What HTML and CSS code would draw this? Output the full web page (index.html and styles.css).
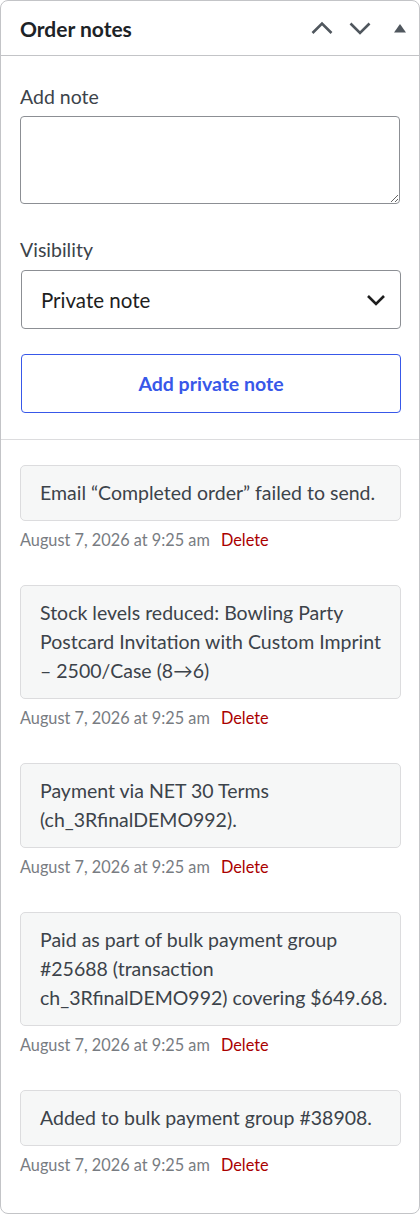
FILE: index.html
```html
<!DOCTYPE html>
<html lang="en">
<head>
<meta charset="utf-8">
<title>Order notes</title>
<link rel="stylesheet" href="styles.css">
</head>
<body>
<div class="postbox">
  <div class="postbox-header">
    <h2 class="postbox-title">Order notes</h2>
    <div class="handle-actions">
      <svg class="icon icon-up" width="24" height="24" viewBox="0 0 24 24"><polyline points="2.5,17 12,7.5 21.5,17" fill="none" stroke="#50575e" stroke-width="2.6"/></svg>
      <svg class="icon icon-down" width="24" height="24" viewBox="0 0 24 24"><polyline points="2.5,7.5 12,17 21.5,7.5" fill="none" stroke="#50575e" stroke-width="2.6"/></svg>
      <svg class="icon icon-toggle" width="16" height="24" viewBox="0 0 16 24"><polygon points="2,16.5 8,8 14,16.5" fill="#50575e"/></svg>
    </div>
  </div>
  <div class="add-note">
    <label class="field-label" for="note">Add note</label>
    <textarea id="note" class="note-input"></textarea>
    <label class="field-label label-visibility" for="vis">Visibility</label>
    <div class="select-wrap">
      <select id="vis" class="note-select"><option>Private note</option><option>Note to customer</option></select>
      <svg class="select-arrow" width="20" height="12" viewBox="0 0 20 12"><polyline points="2,2 10,10 18,2" fill="none" stroke="#1e1e1e" stroke-width="2.6"/></svg>
    </div>
    <button class="add-btn" type="button">Add private note</button>
  </div>
  <ul class="notes">
    <li class="note">
      <div class="note-content">Email “Completed order” failed to send.</div>
      <p class="meta">August 7, 2026 at 9:25 am <a class="delete" href="#">Delete</a></p>
    </li>
    <li class="note">
      <div class="note-content">Stock levels reduced: Bowling Party Postcard Invitation with Custom Imprint – 2500/Case (8→6)</div>
      <p class="meta">August 7, 2026 at 9:25 am <a class="delete" href="#">Delete</a></p>
    </li>
    <li class="note">
      <div class="note-content">Payment via NET 30 Terms (ch_3RfinalDEMO992).</div>
      <p class="meta">August 7, 2026 at 9:25 am <a class="delete" href="#">Delete</a></p>
    </li>
    <li class="note">
      <div class="note-content">Paid as part of bulk payment group #25688 (transaction ch_3RfinalDEMO992) covering $649.68.</div>
      <p class="meta">August 7, 2026 at 9:25 am <a class="delete" href="#">Delete</a></p>
    </li>
    <li class="note">
      <div class="note-content">Added to bulk payment group #38908.</div>
      <p class="meta">August 7, 2026 at 9:25 am <a class="delete" href="#">Delete</a></p>
    </li>
  </ul>
</div>
</body>
</html>
```

FILE: styles.css
```css
* { box-sizing: border-box; }
html, body { margin: 0; padding: 0; background: #fff; }
body {
  font-family: "Lato", "Noto Sans", "Liberation Sans", sans-serif;
  color: #3c434a;
  width: 420px;
  height: 1214px;
}
.postbox {
  width: 420px;
  height: 1214px;
  border: 1px solid #c3c4c7;
  border-radius: 8px;
  background: #fff;
  overflow: hidden;
}
.postbox-header {
  height: 55px;
  border-bottom: 1px solid #c3c4c7;
  display: flex;
  align-items: center;
  padding: 0 11px 0 19px;
}
.postbox-title {
  flex: 1;
  margin: 0;
  font-size: 21px;
  font-weight: 700;
  color: #1d2327;
  line-height: 1;
}
.handle-actions { display: flex; align-items: center; }
.icon { display: block; }
.icon-down { margin-left: 14px; }
.icon-toggle { margin-left: 20px; }

.add-note {
  padding: 27px 18px 26px 19px;
  border-bottom: 1px solid #dcdcde;
  display: flex;
  flex-direction: column;
}
.field-label {
  display: block;
  font-size: 19.5px;
  line-height: 27px;
  color: #3c434a;
  margin-bottom: 6px;
}
.label-visibility { margin-top: 32px; margin-bottom: 7px; }
.note-input {
  display: block;
  width: 380px;
  height: 88px;
  border: 1px solid #8c8f94;
  border-radius: 4px;
  background: #fff;
  font: inherit;
  resize: vertical;
}
.select-wrap {
  position: relative;
  margin-left: 1px;
  width: 380px;
}
.note-select {
  display: block;
  width: 380px;
  height: 59px;
  appearance: none;
  -webkit-appearance: none;
  border: 1px solid #8c8f94;
  border-radius: 4px;
  background: #fff;
  font-family: inherit;
  font-size: 20.5px;
  color: #1e1e1e;
  padding: 0 40px 0 19px;
}
.select-arrow {
  position: absolute;
  right: 15px;
  top: 24px;
}
.add-btn {
  margin: 25px 0 0 1px;
  width: 380px;
  height: 59px;
  border: 1px solid #3858e9;
  border-radius: 4px;
  background: #fff;
  color: #3858e9;
  font-family: inherit;
  font-size: 19.5px;
  font-weight: 700;
}

.notes {
  list-style: none;
  margin: 0;
  padding: 25px 18px 0 19px;
}
.note { margin: 0 0 34px; }
.note:last-child { margin-bottom: 0; }
.note-content {
  background: #f6f7f7;
  border: 1px solid #dcdcde;
  border-radius: 5px;
  padding: 12px 12px 13px 19px;
  font-size: 19.5px;
  line-height: 29px;
  color: #3c434a;
}
.meta {
  margin: 8px 0 0;
  font-size: 16.3px;
  line-height: 22px;
  color: #787c82;
}
.delete {
  color: #a00;
  text-decoration: none;
  margin-left: 7px;
}
```
